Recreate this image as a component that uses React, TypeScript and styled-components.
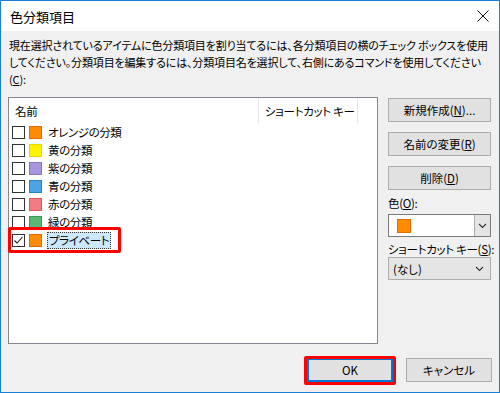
import styled, { createGlobalStyle } from "styled-components";

const GlobalStyle = createGlobalStyle`
  html, body {
    margin: 0;
    padding: 0;
  }
  body {
    font-family: "Noto Sans CJK JP", "Noto Sans", sans-serif;
    color: #000;
  }
`;

const Window = styled.div`
  width: 500px;
  height: 393px;
  box-sizing: border-box;
  border: 1px solid #1a7fd4;
  display: flex;
  flex-direction: column;
  background: #f0f0f0;
  overflow: hidden;
`;

const TitleBar = styled.div`
  height: 30px;
  background: #fff;
  display: flex;
  align-items: center;
  justify-content: space-between;
  padding: 0 9px 0 9px;
  font-size: 13px;
  font-feature-settings: "palt";
`;

const CloseIcon = styled.svg`
  width: 12px;
  height: 12px;
  margin-right: 1px;
`;

const Body = styled.div`
  flex: 1;
  display: flex;
  flex-direction: column;
  padding: 6px 7px 9px 7px;
`;

const Description = styled.div`
  font-size: 11px;
  line-height: 17px;
  white-space: nowrap;
  font-feature-settings: "palt";
  letter-spacing: -0.15px;
  padding-left: 1px;
  margin-bottom: 9px;
`;

const Key = styled.span`
  text-decoration: underline;
`;

const Main = styled.div`
  display: flex;
  gap: 10px;
  height: 247px;
`;

const ListBox = styled.div`
  width: 370px;
  box-sizing: border-box;
  border: 1px solid #828790;
  background: #fff;
  display: flex;
  flex-direction: column;
`;

const Header = styled.div`
  height: 25px;
  display: flex;
  font-size: 11.5px;
  font-feature-settings: "palt";
  white-space: nowrap;
`;

const HeaderCell = styled.div<{ $w: number }>`
  width: ${(p) => p.$w}px;
  box-sizing: border-box;
  display: flex;
  align-items: center;
  padding-left: 6px;
  border-right: 1px solid #e5e5e5;
  margin-top: 1px;
  letter-spacing: -0.3px;
`;

const Row = styled.div`
  height: 18px;
  display: flex;
  align-items: center;
  padding-left: 3px;
  font-size: 11.5px;
  font-feature-settings: "palt";
  letter-spacing: -0.4px;
`;

const Check = styled.span`
  width: 13px;
  height: 13px;
  box-sizing: border-box;
  border: 1px solid #333;
  background: #fff;
  display: flex;
  align-items: center;
  justify-content: center;
  margin-right: 4px;
`;

const Swatch = styled.span<{ $fill: string; $edge: string; $size?: number }>`
  width: ${(p) => p.$size ?? 13}px;
  height: ${(p) => p.$size ?? 13}px;
  box-sizing: border-box;
  background: ${(p) => p.$fill};
  border: 1px solid ${(p) => p.$edge};
  display: inline-block;
`;

const Label = styled.span<{ $selected?: boolean }>`
  margin-left: ${(p) => (p.$selected ? "5px" : "6px")};
  padding: ${(p) => (p.$selected ? "0 2px" : "0")};
  line-height: 17px;
  background: ${(p) => (p.$selected ? "#cce8ff" : "transparent")};
  outline: ${(p) => (p.$selected ? "1px dotted #333" : "none")};
  outline-offset: -1px;
`;

const Highlight = styled.div`
  position: relative;
  &::after {
    content: "";
    position: absolute;
    left: -4px;
    top: -4px;
    width: 113px;
    height: 26px;
    box-sizing: border-box;
    border: 3px solid #f00;
    border-radius: 2px;
    pointer-events: none;
  }
`;

const Side = styled.div`
  width: 103px;
  display: flex;
  flex-direction: column;
  padding-top: 1px;
`;

const Button = styled.button<{ $w?: number }>`
  width: ${(p) => (p.$w ? `${p.$w}px` : "100%")};
  height: 24px;
  box-sizing: border-box;
  border: 1px solid #adadad;
  background: #e1e1e1;
  font-family: inherit;
  font-size: 11.5px;
  font-feature-settings: "palt";
  padding: 0;
  color: #000;
  margin-bottom: 10px;
  white-space: nowrap;
`;

const FieldLabel = styled.div<{ $gap: number }>`
  font-size: 11.5px;
  font-feature-settings: "palt";
  letter-spacing: -0.3px;
  white-space: nowrap;
  height: 16px;
  line-height: 16px;
  margin: -5px 0 ${(p) => p.$gap}px 0;
`;

const Combo = styled.div<{ $flat?: boolean }>`
  height: 23px;
  box-sizing: border-box;
  border: 1px solid ${(p) => (p.$flat ? "#acacac" : "#7a7a7a")};
  background: ${(p) => (p.$flat ? "#e5e5e5" : "#fff")};
  display: flex;
  align-items: center;
  font-size: 11.5px;
  font-feature-settings: "palt";
  margin-bottom: 9px;
`;

const ComboValue = styled.div`
  flex: 1;
  display: flex;
  align-items: center;
  padding-left: 4px;
`;

const DropBtn = styled.div<{ $flat?: boolean }>`
  width: 16px;
  height: 100%;
  box-sizing: border-box;
  border-left: ${(p) => (p.$flat ? "none" : "1px solid #acacac")};
  background: ${(p) => (p.$flat ? "transparent" : "#e5e5e5")};
  display: flex;
  align-items: center;
  justify-content: center;
  margin-right: ${(p) => (p.$flat ? "3px" : "0")};
`;

const Footer = styled.div`
  display: flex;
  justify-content: flex-end;
  gap: 13px;
  margin-top: 14px;
`;

const DefaultButton = styled(Button)`
  border: 2px solid #0078d7;
  position: relative;
  margin: 0;
  &::after {
    content: "";
    position: absolute;
    left: -5px;
    top: -4px;
    right: -5px;
    bottom: -5px;
    border: 3px solid #f00;
    border-radius: 2px;
  }
`;

const PlainButton = styled(Button)`
  margin: 0;
`;

const Chevron = () => (
  <svg width="9" height="6" viewBox="0 0 9 6">
    <path d="M1 1 L4.5 4.5 L8 1" fill="none" stroke="#333" strokeWidth="1.1" />
  </svg>
);

const items = [
  { name: "オレンジの分類", fill: "#ff8c00", edge: "#e56a00" },
  { name: "黄の分類", fill: "#fff200", edge: "#e5d800" },
  { name: "紫の分類", fill: "#a994e0", edge: "#8a72c9" },
  { name: "青の分類", fill: "#4ca3e6", edge: "#2b81c8" },
  { name: "赤の分類", fill: "#f47b86", edge: "#df5565" },
  { name: "緑の分類", fill: "#5ab877", edge: "#3a9a58" },
];

export default function App() {
  return (
    <>
      <GlobalStyle />
      <Window>
        <TitleBar>
          <span>色分類項目</span>
          <CloseIcon viewBox="0 0 12 12">
            <path d="M0.5 0.5 L11.5 11.5 M11.5 0.5 L0.5 11.5" stroke="#111" strokeWidth="1" />
          </CloseIcon>
        </TitleBar>
        <Body>
          <Description>
            現在選択されているアイテムに色分類項目を割り当てるには、各分類項目の横のチェック ボックスを使用
            <br />
            してください。分類項目を編集するには、分類項目名を選択して、右側にあるコマンドを使用してください
            <br />
            (<Key>C</Key>):
          </Description>
          <Main>
            <ListBox>
              <Header>
                <HeaderCell $w={250}>名前</HeaderCell>
                <HeaderCell $w={99}>ショートカット キー</HeaderCell>
              </Header>
              {items.map((it) => (
                <Row key={it.name}>
                  <Check />
                  <Swatch $fill={it.fill} $edge={it.edge} />
                  <Label>{it.name}</Label>
                </Row>
              ))}
              <Row>
                <Highlight>
                  <Row style={{ paddingLeft: 0 }}>
                    <Check>
                      <svg width="11" height="11" viewBox="0 0 11 11">
                        <path d="M1.5 5.5 L4 8 L9.5 2" fill="none" stroke="#222" strokeWidth="1.1" />
                      </svg>
                    </Check>
                    <Swatch $fill="#ff8c00" $edge="#e56a00" />
                    <Label $selected>プライベート</Label>
                  </Row>
                </Highlight>
              </Row>
            </ListBox>
            <Side>
              <Button>
                新規作成(<Key>N</Key>)...
              </Button>
              <Button>
                名前の変更(<Key>R</Key>)
              </Button>
              <Button>
                削除(<Key>D</Key>)
              </Button>
              <FieldLabel $gap={3}>
                色(<Key>O</Key>):
              </FieldLabel>
              <Combo>
                <ComboValue>
                  <Swatch $fill="#ff8c00" $edge="#e56a00" $size={14} style={{ marginLeft: 4 }} />
                </ComboValue>
                <DropBtn>
                  <Chevron />
                </DropBtn>
              </Combo>
              <FieldLabel $gap={0}>
                ショートカット キー(<Key>S</Key>):
              </FieldLabel>
              <Combo $flat>
                <ComboValue>(なし)</ComboValue>
                <DropBtn $flat>
                  <Chevron />
                </DropBtn>
              </Combo>
            </Side>
          </Main>
          <Footer>
            <DefaultButton $w={86}>OK</DefaultButton>
            <PlainButton $w={86}>キャンセル</PlainButton>
          </Footer>
        </Body>
      </Window>
    </>
  );
}
